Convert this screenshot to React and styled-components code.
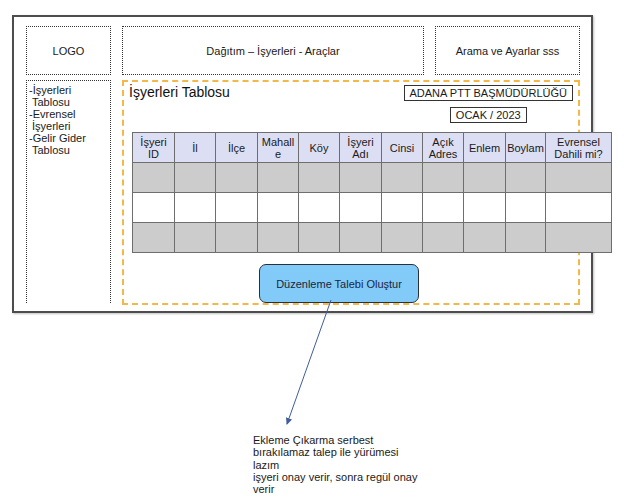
import React from "react";
import styled, { createGlobalStyle } from "styled-components";

const GlobalStyle = createGlobalStyle`
  html, body {
    margin: 0;
    padding: 0;
    background: #ffffff;
  }
  body {
    font-family: "Liberation Sans", Arial, sans-serif;
    color: #1a1a1a;
  }
`;

const columns = [
  { label: "İşyeri ID", width: 42 },
  { label: "İl", width: 41 },
  { label: "İlçe", width: 42 },
  { label: <>Mahall<br />e</>, width: 41 },
  { label: "Köy", width: 41 },
  { label: "İşyeri Adı", width: 42 },
  { label: "Cinsi", width: 41 },
  { label: "Açık Adres", width: 41 },
  { label: "Enlem", width: 42 },
  { label: "Boylam", width: 40 },
  { label: "Evrensel Dahili mi?", width: 66 },
];

const rows = [true, false, true];

export default function App() {
  return (
    <Page>
      <GlobalStyle />
      <Frame>
        <TopBox>LOGO</TopBox>
        <TopBox>Dağıtım – İşyerleri - Araçlar</TopBox>
        <TopBox>Arama ve Ayarlar sss</TopBox>
        <Sidebar>
          <NavItem>-İşyerleri Tablosu</NavItem>
          <NavItem>-Evrensel İşyerleri</NavItem>
          <NavItem>-Gelir Gider Tablosu</NavItem>
        </Sidebar>
        <Panel>
          <PanelHead>
            <Title>İşyerleri Tablosu</Title>
            <Badges>
              <Badge>ADANA PTT BAŞMÜDÜRLÜĞÜ</Badge>
              <Badge>OCAK / 2023</Badge>
            </Badges>
          </PanelHead>
          <Table>
            <colgroup>
              {columns.map((c, i) => (
                <col key={i} style={{ width: c.width }} />
              ))}
            </colgroup>
            <thead>
              <tr>
                {columns.map((c, i) => (
                  <Th key={i}>{c.label}</Th>
                ))}
              </tr>
            </thead>
            <tbody>
              {rows.map((shaded, r) => (
                <tr key={r}>
                  {columns.map((c, i) => (
                    <Td key={i} $shaded={shaded} />
                  ))}
                </tr>
              ))}
            </tbody>
          </Table>
          <ActionButton type="button">Düzenleme Talebi Oluştur</ActionButton>
        </Panel>
      </Frame>
      <Note>
        Ekleme Çıkarma serbest bırakılamaz talep ile yürümesi lazım
        <br />
        işyeri onay verir, sonra regül onay verir
      </Note>
      <Connector width="628" height="499" viewBox="0 0 628 499">
        <defs>
          <marker
            id="tip"
            markerWidth="8"
            markerHeight="8"
            refX="6"
            refY="4"
            orient="auto"
            markerUnits="userSpaceOnUse"
          >
            <path d="M0,0.8 L7,4 L0,7.2 Z" fill="#3f5d9c" />
          </marker>
        </defs>
        <line
          x1="331"
          y1="300"
          x2="287"
          y2="424"
          stroke="#3f5d9c"
          strokeWidth="1"
          markerEnd="url(#tip)"
        />
      </Connector>
    </Page>
  );
}

const Page = styled.div`
  position: relative;
  width: 628px;
  height: 499px;
  box-sizing: border-box;
  padding: 15px 0 0 12px;
  overflow: hidden;
`;

const Frame = styled.div`
  width: 581px;
  box-sizing: border-box;
  border: 2px solid #4d4d4d;
  box-shadow: 1px 1px 2px rgba(0, 0, 0, 0.25);
  padding: 9px 11px 6px 12px;
  display: grid;
  grid-template-columns: 85px 302px 145px;
  grid-template-rows: 49px 225px;
  column-gap: 11px;
  row-gap: 5px;
  background: #ffffff;
`;

const TopBox = styled.div`
  border: 1px dotted #333;
  display: flex;
  align-items: center;
  justify-content: center;
  font-size: 11px;
  color: #1a1a1a;
`;

const Sidebar = styled.div`
  border: 1px dotted #333;
  border-bottom: none;
  height: 223px;
  box-sizing: border-box;
  padding: 3px 4px 0 5px;
  font-size: 11px;
  line-height: 12px;
  color: #1a1a1a;
`;

const NavItem = styled.div`
  text-indent: -3px;
`;

const Panel = styled.div`
  grid-column: 2 / 4;
  border: 2px dashed #f2b948;
  padding: 2px 5px 0 5px;
  display: flex;
  flex-direction: column;
  align-items: flex-start;
  min-width: 0;
`;

const PanelHead = styled.div`
  align-self: stretch;
  display: flex;
  justify-content: space-between;
  align-items: flex-start;
`;

const Title = styled.div`
  font-size: 14px;
  line-height: 16px;
  color: #111;
`;

const Badges = styled.div`
  display: flex;
  flex-direction: column;
  align-items: center;
  gap: 6px;
  margin-top: 1px;
`;

const Badge = styled.div`
  border: 1px solid #333;
  padding: 0 5px;
  font-size: 11px;
  line-height: 14px;
  color: #1a1a1a;
  white-space: nowrap;
`;

const Table = styled.table`
  flex-shrink: 0;
  width: 479px;
  table-layout: fixed;
  border-collapse: collapse;
  margin: 9px 0 0 3px;
`;

const Th = styled.th`
  height: 29px;
  padding: 0 1px;
  background: #dcdff4;
  border: 1px solid #6e6e6e;
  font-weight: normal;
  font-size: 11px;
  line-height: 12px;
  color: #1a1a1a;
  text-align: center;
  vertical-align: middle;
`;

const Td = styled.td`
  height: 29px;
  padding: 0;
  border: 1px solid #6e6e6e;
  background: ${(p) => (p.$shaded ? "#cccccc" : "#ffffff")};
`;

const ActionButton = styled.button`
  margin: 11px 0 0 130px;
  width: 160px;
  height: 39px;
  border: 1px solid #2b2f3a;
  border-radius: 7px;
  background: #82cbf8;
  font-family: "Liberation Sans", Arial, sans-serif;
  font-size: 11px;
  color: #1c2540;
  padding: 0;
`;

const Note = styled.div`
  margin: 121px 0 0 241px;
  width: 172px;
  font-size: 11px;
  line-height: 12.3px;
  color: #1a1a1a;
`;

const Connector = styled.svg`
  position: absolute;
  left: 0;
  top: 0;
  pointer-events: none;
`;
